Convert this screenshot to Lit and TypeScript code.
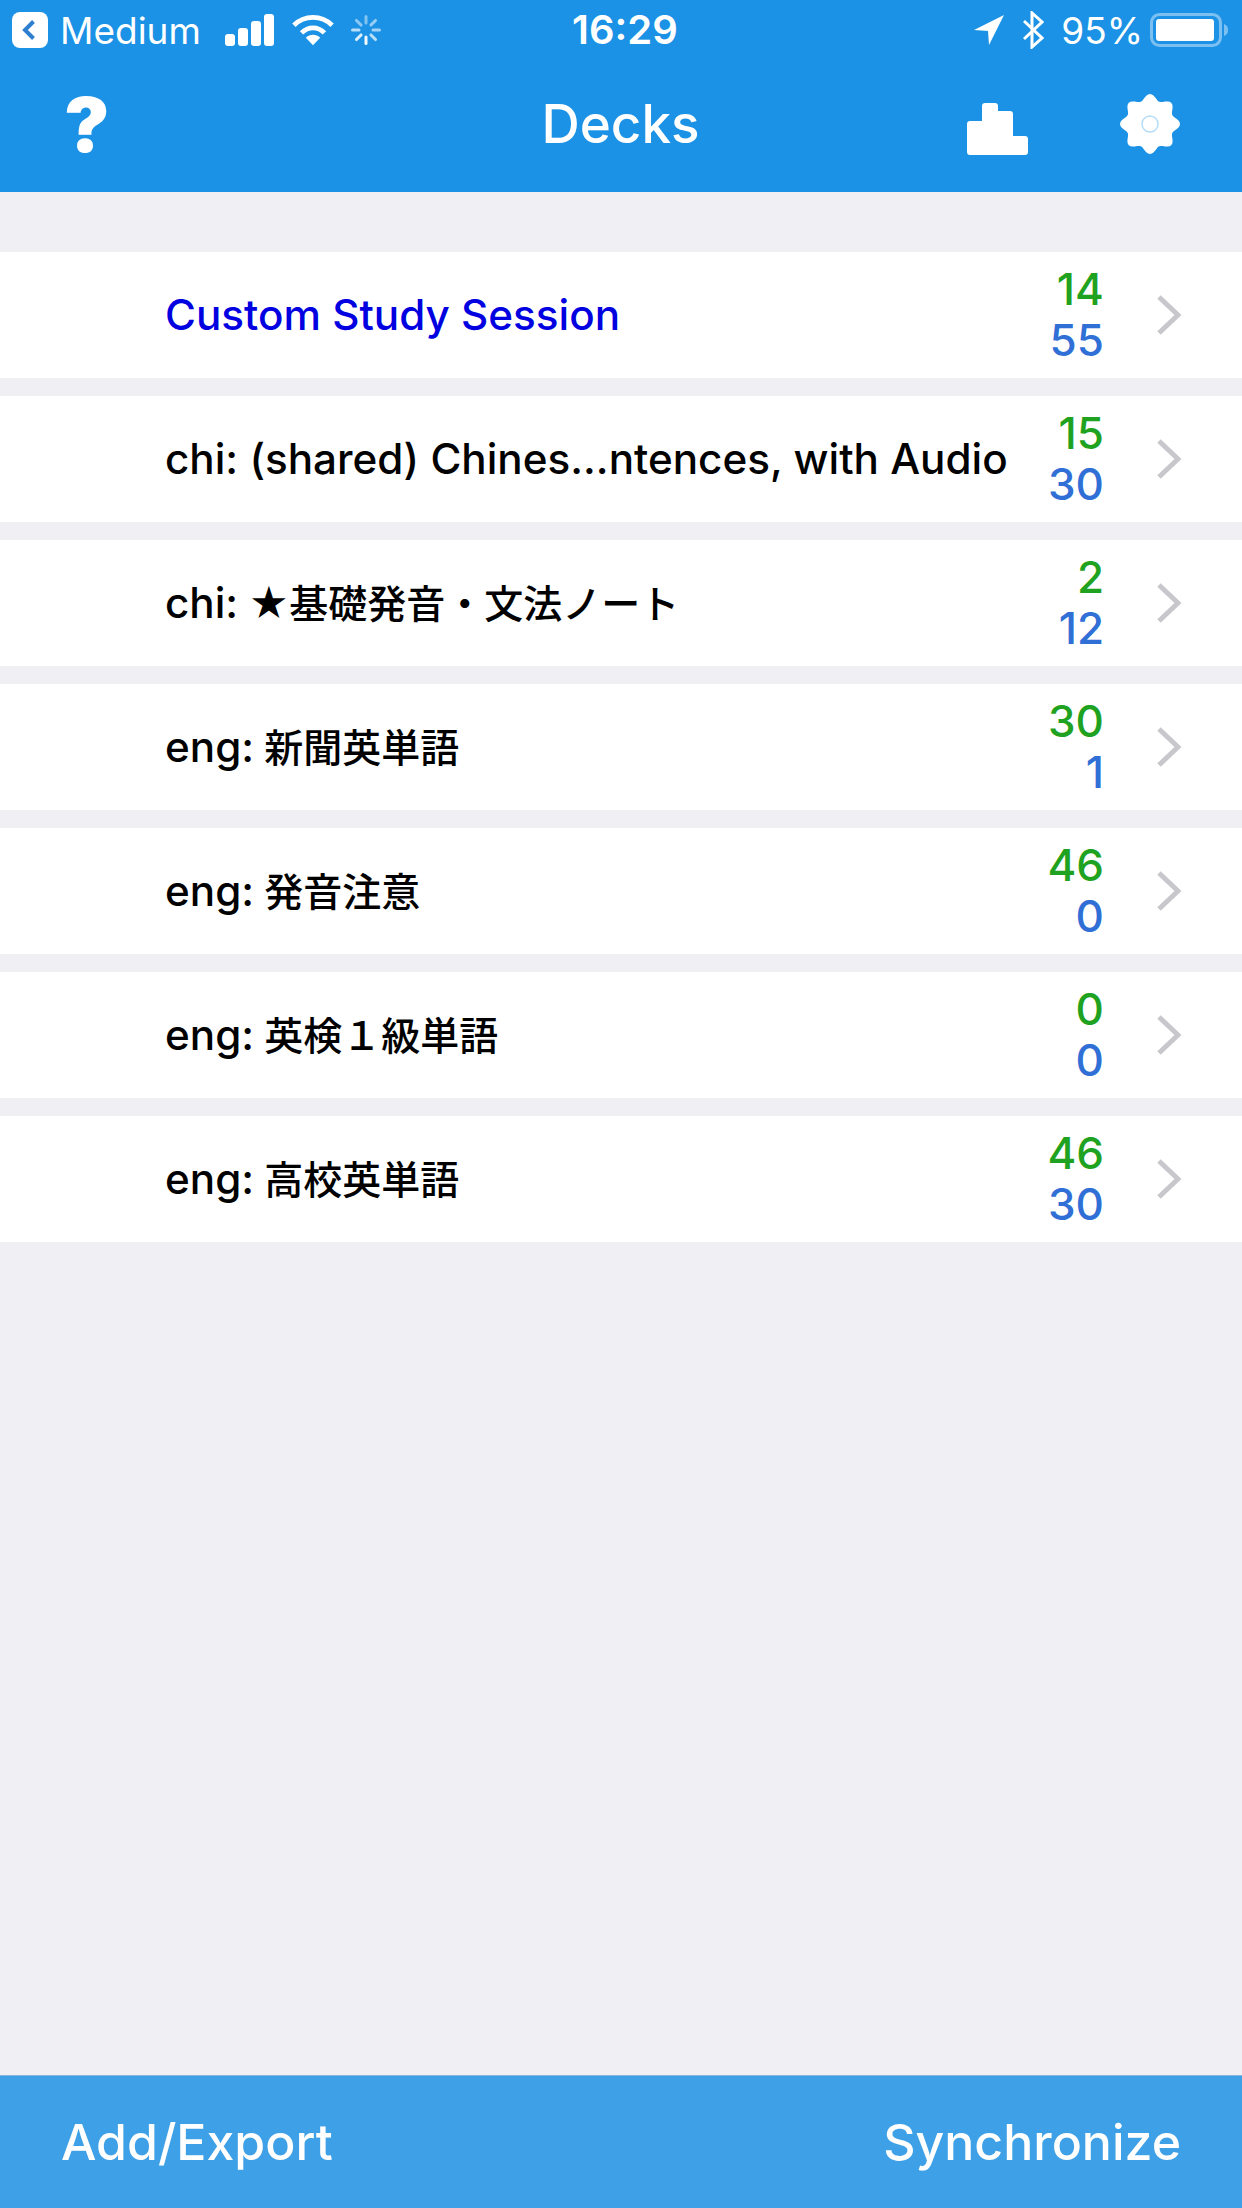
import { LitElement, html, css, svg } from "lit";
import { customElement } from "lit/decorators.js";

const decks = [
  { name: "Custom Study Session", a: "14", b: "55", custom: true },
  { name: "chi: (shared) Chines...ntences, with Audio", a: "15", b: "30" },
  { name: "chi: ★基礎発音・文法ノート", a: "2", b: "12" },
  { name: "eng: 新聞英単語", a: "30", b: "1" },
  { name: "eng: 発音注意", a: "46", b: "0" },
  { name: "eng: 英検１級単語", a: "0", b: "0" },
  { name: "eng: 高校英単語", a: "46", b: "30" },
];

const spinner = [0, 45, 90, 135, 180, 225, 270, 315].map(
  (r, i) => svg`<rect x="13.5" y="0" width="3" height="9.5" rx="1.5" fill="#fff" opacity="${[0.45, 0.55, 0.6, 0.7, 0.95, 0.85, 0.7, 0.5][i]}" transform="rotate(${r} 15 15)"/>`
);

function gearPath() {
  const pts: string[] = [];
  for (let i = 0; i < 96; i++) {
    const t = (i / 96) * Math.PI * 2;
    const r = 27 + 3 * Math.cos(8 * t);
    pts.push(`${(30 + r * Math.sin(t)).toFixed(2)} ${(30 - r * Math.cos(t)).toFixed(2)}`);
  }
  return `M${pts.join(" L")} Z`;
}

function nameRuns(name: string) {
  return name
    .split(/([^\x00-\x7f]+)/)
    .map((p, i) => (i % 2 ? html`<span class="cjk">${p}</span>` : p));
}

@customElement("app-root")
export class AppRoot extends LitElement {
  static styles = css`
    :host {
      display: flex;
      flex-direction: column;
      width: 1242px;
      height: 2208px;
      background: #efeff4;
      font-family: Inter, "Noto Sans CJK JP", sans-serif;
      overflow: hidden;
    }
    .top {
      background: #1b92e5;
      height: 192px;
      color: #fff;
      display: flex;
      flex-direction: column;
      flex: none;
    }
    .status {
      height: 60px;
      display: flex;
      align-items: center;
      justify-content: space-between;
      padding: 0 14px 0 12px;
      font-size: 37px;
      font-weight: 400;
      position: relative;
    }
    .side {
      display: flex;
      align-items: center;
    }
    .clock {
      position: absolute;
      left: 572px;
      top: 9px;
      font-size: 40px;
      font-weight: 600;
      line-height: 42px;
    }
    .carrier { margin-left: 12px; margin-right: 24px; }
    .pct { margin: 0 7px 0 17px; }
    .wifi { margin-left: 17px; }
    .spin { margin-left: 17px; }
    .bt { margin-left: 18px; }
    .nav {
      flex: 1;
      display: grid;
      grid-template-columns: 1fr auto 1fr;
      align-items: center;
      padding: 0 62px 4px 64px;
    }
    .title {
      font-size: 53px;
      font-weight: 500;
      margin-left: -3px;
    }
    .help {
      font-weight: 900;
      font-size: 76px;
      line-height: 76px;
    }
    .navr {
      display: flex;
      justify-content: flex-end;
      align-items: center;
      gap: 92px;
    }
    .chart { margin-top: 9px; }
    .list {
      flex: 1;
      padding-top: 60px;
      display: flex;
      flex-direction: column;
      gap: 18px;
    }
    .row {
      height: 126px;
      background: #fff;
      display: flex;
      align-items: center;
      padding: 0 61px 0 165px;
    }
    .name {
      flex: 1;
      font-size: 42.2px;
      line-height: 50px;
      font-weight: 500;
      color: #000;
      white-space: nowrap;
      margin-top: -1px;
    }
    .cjk {
      font-size: 39px;
      line-height: 1;
      margin-left: -1px;
    }
    .name.custom { color: #0000e0; }
    .counts {
      width: 90px;
      text-align: right;
      font-size: 44px;
      font-weight: 500;
      line-height: 51px;
      margin-right: 53px;
      margin-top: -1px;
    }
    .g { color: #1fa21f; }
    .b { color: #2f6fd6; }
    .bottom {
      flex: none;
      height: 133px;
      background: #3ea0e6;
      border-top: 1px solid #8ab4d8;
      box-sizing: border-box;
      display: flex;
      align-items: center;
      justify-content: space-between;
      padding: 0 61px;
      color: #fff;
      font-size: 50px;
      font-weight: 500;
    }
  `;

  render() {
    return html`
      <div class="top">
        <div class="status">
          <div class="side">
            <svg width="36" height="36" viewBox="0 0 36 36">
              <rect width="36" height="36" rx="8" fill="#fff"/>
              <path d="M21.5 9.5 L13 18 L21.5 26.5" fill="none" stroke="#2f7fd0" stroke-width="4"/>
            </svg>
            <span class="carrier">Medium</span>
            <svg width="50" height="32" viewBox="0 0 50 32">
              <rect x="0" y="20" width="10" height="12" rx="3" fill="#fff"/>
              <rect x="13" y="14" width="10" height="18" rx="3" fill="#fff"/>
              <rect x="26" y="7" width="10" height="25" rx="3" fill="#fff"/>
              <rect x="39" y="0" width="10" height="32" rx="3" fill="#fff"/>
            </svg>
            <svg class="wifi" width="42" height="32" viewBox="0 0 44 32">
              <path d="M2 11 C13 0 31 0 42 11" fill="none" stroke="#fff" stroke-width="5"/>
              <path d="M10 19 C17 12 27 12 34 19" fill="none" stroke="#fff" stroke-width="5"/>
              <path d="M14.5 24 C19 20 25 20 29.500 24 L22 32 Z" fill="#fff"/>
            </svg>
            <svg class="spin" width="30" height="30" viewBox="0 0 30 30">${spinner}</svg>
          </div>
          <div class="clock">16:29</div>
          <div class="side">
            <svg width="30" height="30" viewBox="0 0 30 30"><path d="M0 15 L30 0 L15 30 L14 16 Z" fill="#fff"/></svg>
            <svg class="bt" width="22" height="38" viewBox="0 0 22 38">
              <path d="M2 10 L20 27 L10 36 V2 L20 11 L2 28" fill="none" stroke="#fff" stroke-width="3"/>
            </svg>
            <span class="pct">95%</span>
            <svg width="78" height="34" viewBox="0 0 78 34">
              <rect x="1.500" y="1.500" width="69" height="31" rx="8" fill="none" stroke="#7cc0f2" stroke-width="3"/>
              <rect x="6" y="6" width="58" height="22" rx="3" fill="#fff"/>
              <path d="M74 11 C77 12 78 14 78 17 C78 20 77 22 74 23 Z" fill="#7cc0f2"/>
            </svg>
          </div>
        </div>
        <div class="nav">
          <div class="help">?</div>
          <div class="title">Decks</div>
          <div class="navr">
            <svg class="chart" width="61" height="52" viewBox="0 0 61 52">
              <path d="M0 21 Q0 18 3 18 H15 V3 Q15 0 18 0 H28 Q31 0 31 3 V8 H43 Q46 8 46 11 V33 H58 Q61 33 61 36 V49 Q61 52 58 52 H3 Q0 52 0 49 Z" fill="#fff"/>
            </svg>
            <svg width="60" height="60" viewBox="0 0 60 60">
              <path fill="#fff" d="${gearPath()}"/>
              <circle cx="30" cy="30" r="8" fill="#fff" stroke="#b5dcf5" stroke-width="1.500"/>
            </svg>
          </div>
        </div>
      </div>
      <div class="list">
        ${decks.map(
          (d) => html`
            <div class="row">
              <div class="name ${d.custom ? "custom" : ""}">${nameRuns(d.name)}</div>
              <div class="counts">
                <div class="g">${d.a}</div>
                <div class="b">${d.b}</div>
              </div>
              <svg width="24" height="40" viewBox="0 0 24 40">
                <path d="M2 2 L21 20 L2 38" fill="none" stroke="#c7c7cc" stroke-width="5"/>
              </svg>
            </div>
          `
        )}
      </div>
      <div class="bottom">
        <span>Add/Export</span>
        <span>Synchronize</span>
      </div>
    `;
  }
}
